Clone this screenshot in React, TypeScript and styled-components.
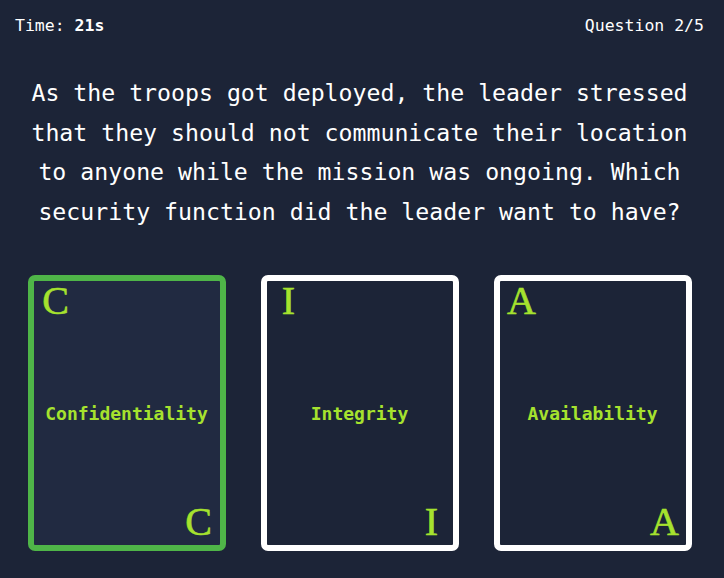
import styled, { createGlobalStyle } from "styled-components";

const GlobalStyle = createGlobalStyle`
  html, body {
    margin: 0;
    padding: 0;
    background: #1c2437;
  }
  body {
    font-family: "DejaVu Sans Mono", monospace;
    color: #ffffff;
  }
`;

const options = [
  { letter: "C", label: "Confidentiality", selected: true },
  { letter: "I", label: "Integrity", selected: false },
  { letter: "A", label: "Availability", selected: false },
];

export default function App() {
  return (
    <>
      <GlobalStyle />
      <Page>
        <Header>
          <span>
            Time: <strong>21s</strong>
          </span>
          <span>Question 2/5</span>
        </Header>
        <Question>
          As the troops got deployed, the leader stressed that they should not
          communicate their location to anyone while the mission was ongoing.
          Which security function did the leader want to have?
        </Question>
        <Cards>
          {options.map((o) => (
            <Card key={o.letter} $selected={o.selected}>
              <TopLetter>{o.letter}</TopLetter>
              <Label>{o.label}</Label>
              <BottomLetter>{o.letter}</BottomLetter>
            </Card>
          ))}
        </Cards>
      </Page>
    </>
  );
}

const Page = styled.div`
  width: 724px;
  height: 578px;
  box-sizing: border-box;
  padding: 16px 20px 0 15px;
  display: flex;
  flex-direction: column;
`;

const Header = styled.div`
  display: flex;
  justify-content: space-between;
  font-size: 16.5px;

  strong {
    font-weight: bold;
  }
`;

const Question = styled.p`
  margin: 38px 0 0;
  font-size: 23.2px;
  line-height: 39.7px;
  text-align: center;
`;

const Cards = styled.div`
  display: flex;
  justify-content: center;
  gap: 35px;
  margin-top: 43px;
`;

const Card = styled.div<{ $selected: boolean }>`
  box-sizing: border-box;
  width: 198px;
  height: 276px;
  border: 6px solid ${(p) => (p.$selected ? "#4fb548" : "#ffffff")};
  border-radius: 7px;
  background: ${(p) => (p.$selected ? "#212a41" : "transparent")};
  display: grid;
  grid-template-rows: auto 1fr auto;
  color: #a6e22e;
  cursor: pointer;
`;

const Letter = styled.div`
  font-family: "Liberation Serif", serif;
  font-size: 40px;
  line-height: 1;
  text-align: center;
  -webkit-text-stroke: 0.6px #a6e22e;
`;

const TopLetter = styled(Letter)`
  width: 44px;
  justify-self: start;
`;

const BottomLetter = styled(Letter)`
  width: 42px;
  justify-self: end;
  margin-bottom: 3px;
`;

const Label = styled.div`
  align-self: center;
  text-align: center;
  font-size: 18px;
  font-weight: bold;
  position: relative;
  top: 2px;
`;
